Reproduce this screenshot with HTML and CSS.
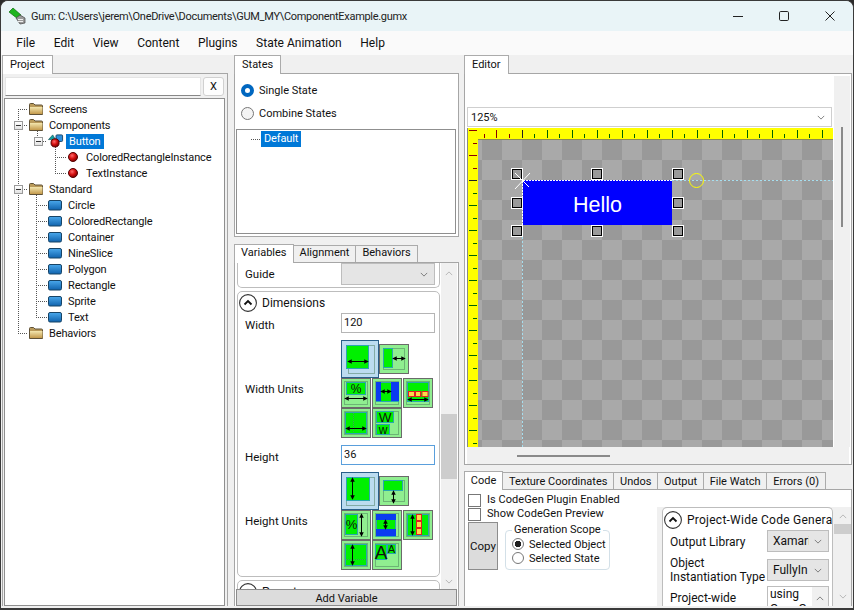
FILE: index.html
```html
<!DOCTYPE html>
<html lang="en">
<head>
  <meta charset="UTF-8">
  <title>Gum</title>
  <link rel="stylesheet" href="styles.css">
</head>
<body>
  <svg class="defs" width="0" height="0">
    <defs>
      <marker id="ah" viewBox="0 0 6 6" refX="5" refY="3" markerWidth="4.5" markerHeight="4.5" orient="auto-start-reverse"><path d="M0 0L6 3L0 6z"/></marker>
      <linearGradient id="folderFront" x1="0" y1="0" x2="0" y2="1"><stop offset="0" stop-color="#f3e6ae"/><stop offset="1" stop-color="#c49a4c"/></linearGradient>
      <linearGradient id="blueFront" x1="0" y1="0" x2="0" y2="1"><stop offset="0" stop-color="#4aa8ec"/><stop offset="1" stop-color="#0f62ac"/></linearGradient>
      <radialGradient id="ballFill" cx="0.4" cy="0.35" r="0.7"><stop offset="0" stop-color="#ff6a6a"/><stop offset="0.5" stop-color="#d40f0f"/><stop offset="1" stop-color="#6a0000"/></radialGradient>
      <symbol id="folder" viewBox="0 0 16 16"><path d="M1.5 13.5V3.5q0-1 1-1h3l1.500 1.500h6.500q1 0 1 1v8.500z" fill="#b99a5a" stroke="#5f5136"/><rect x="2" y="6" width="12.500" height="7" fill="url(#folderFront)"/></symbol>
      <symbol id="blue" viewBox="0 0 16 16"><rect x="1.500" y="3.500" width="13" height="9.500" rx="1.500" fill="url(#blueFront)" stroke="#174466"/></symbol>
      <symbol id="ball" viewBox="0 0 16 16"><circle cx="8" cy="8" r="4.500" fill="url(#ballFill)" stroke="#500"/></symbol>
      <symbol id="combo-icon" viewBox="0 0 17 16"><path d="M0.500 6.500L5 1.500L8 6.500z" fill="#12a0a0" stroke="#0b4f55" stroke-width=".7"/><rect x="8.500" y="1.500" width="7" height="7" rx="1" fill="#2f8fdc" stroke="#174466"/><circle cx="7.500" cy="10" r="4.300" fill="url(#ballFill)" stroke="#500"/></symbol>
      <symbol id="up" viewBox="0 0 18 18"><circle cx="9" cy="9" r="8.400" fill="#fff" stroke="#333" stroke-width="1.100"/><path d="M5.500 10.500L9 7L12.500 10.500" fill="none" stroke="#111" stroke-width="1.800"/></symbol>
      <symbol id="chev" viewBox="0 0 10 6"><path d="M1 1L5 5L9 1" fill="none" stroke="currentColor" stroke-width="1"/></symbol>
      <symbol id="chev-up" viewBox="0 0 10 6"><path d="M1 5L5 1L9 5" fill="none" stroke="currentColor" stroke-width="1"/></symbol>
      <symbol id="handle" viewBox="0 0 12 12"><rect x=".5" y=".5" width="11" height="11" fill="none" stroke="#fff"/><rect x="1.500" y="1.500" width="9" height="9" fill="#9a9a9a" stroke="#000"/></symbol>
    </defs>
  </svg>

  <div class="window">
    <div class="titlebar">
      <svg class="logo" viewBox="0 0 18 18">
        <path d="M1 5L5 1L13 8L10 12z" fill="#1fb51f" stroke="#0b6b0b" stroke-width=".7"/>
        <path d="M8 11L12 8L17 11V16L12 17z" fill="#9a9a9a" stroke="#444" stroke-width=".7"/>
        <path d="M10 12.500h5M10 14.500h5" stroke="#eee"/>
      </svg>
      <span class="title">Gum: C:\Users\jerem\OneDrive\Documents\GUM_MY\ComponentExample.gumx</span>
      <div class="winbtns">
        <span class="winbtn"><svg viewBox="0 0 10 10"><path d="M0 5.500h10" stroke="#222"/></svg></span>
        <span class="winbtn"><svg viewBox="0 0 10 10"><rect x=".5" y=".5" width="9" height="9" rx="1.200" fill="none" stroke="#222"/></svg></span>
        <span class="winbtn"><svg viewBox="0 0 10 10"><path d="M.5 .5L9.500 9.500M9.500 .5L.5 9.500" stroke="#222"/></svg></span>
      </div>
    </div>

    <nav class="menubar">
      <span>File</span><span>Edit</span><span>View</span><span>Content</span><span>Plugins</span><span>State Animation</span><span>Help</span>
    </nav>

    <div class="workspace">
      <!-- project -->
      <section class="col col-project">
        <div class="tabs"><span class="tab active">Project</span></div>
        <div class="pane project-pane">
          <div class="search">
            <div class="search-input"></div>
            <div class="search-btn">X</div>
          </div>
          <div class="tree project-tree">
            <svg class="tree-lines" viewBox="5 99 220 506" width="220" height="506">
              <path d="M18.500 109V333M18 109.500h10M18 125.500h10M18 189.500h10M18 333.500h10M37.500 125V137M41 141.500h6M55.500 147V173M55 157.500h11M55 173.500h11M36.500 189V317M36 205.500h12M36 221.500h12M36 237.500h12M36 253.500h12M36 269.500h12M36 285.500h12M36 301.500h12M36 317.500h12"/>
            </svg>
            <div class="node l0"><svg class="ico"><use href="#folder"/></svg><span class="lbl">Screens</span></div>
            <div class="node l0"><i class="exp"></i><svg class="ico"><use href="#folder"/></svg><span class="lbl">Components</span></div>
            <div class="node l1"><i class="exp"></i><svg class="ico"><use href="#combo-icon"/></svg><span class="lbl selected">Button</span></div>
            <div class="node l2"><svg class="ico"><use href="#ball"/></svg><span class="lbl">ColoredRectangleInstance</span></div>
            <div class="node l2"><svg class="ico"><use href="#ball"/></svg><span class="lbl">TextInstance</span></div>
            <div class="node l0"><i class="exp"></i><svg class="ico"><use href="#folder"/></svg><span class="lbl">Standard</span></div>
            <div class="node l1b"><svg class="ico"><use href="#blue"/></svg><span class="lbl">Circle</span></div>
            <div class="node l1b"><svg class="ico"><use href="#blue"/></svg><span class="lbl">ColoredRectangle</span></div>
            <div class="node l1b"><svg class="ico"><use href="#blue"/></svg><span class="lbl">Container</span></div>
            <div class="node l1b"><svg class="ico"><use href="#blue"/></svg><span class="lbl">NineSlice</span></div>
            <div class="node l1b"><svg class="ico"><use href="#blue"/></svg><span class="lbl">Polygon</span></div>
            <div class="node l1b"><svg class="ico"><use href="#blue"/></svg><span class="lbl">Rectangle</span></div>
            <div class="node l1b"><svg class="ico"><use href="#blue"/></svg><span class="lbl">Sprite</span></div>
            <div class="node l1b"><svg class="ico"><use href="#blue"/></svg><span class="lbl">Text</span></div>
            <div class="node l0"><svg class="ico"><use href="#folder"/></svg><span class="lbl">Behaviors</span></div>
          </div>
        </div>
      </section>

      <!-- states + variables -->
      <section class="col col-middle">
        <div class="tabs"><span class="tab active">States</span></div>
        <div class="pane states-pane">
          <label class="state-opt"><i class="radio-on"></i>Single State</label>
          <label class="state-opt"><i class="radio-off"></i>Combine States</label>
          <div class="tree states-tree">
            <div class="state-node"><i class="dots"></i><span class="lbl selected">Default</span></div>
          </div>
        </div>

        <div class="tabs tabs-vars"><span class="tab active">Variables</span><span class="tab">Alignment</span><span class="tab">Behaviors</span></div>
        <div class="pane vars-pane">
          <div class="vars-body">
            <div class="vars-view">
              <div class="group group-guide">
                <div class="row"><span class="row-label">Guide</span><div class="combo combo-guide"><svg class="chev"><use href="#chev"/></svg></div></div>
              </div>
              <div class="group group-dim">
                <div class="group-head"><svg class="up"><use href="#up"/></svg><span>Dimensions</span></div>
                <div class="row"><span class="row-label">Width</span><div class="textbox">120</div></div>
                <div class="row row-units">
                  <span class="row-label">Width Units</span>
                  <div class="units">
                    <div class="unit-row">
                      <div class="unit unit-sel"><svg viewBox="0 0 36 36">
                        <rect class="u-dots" x="6.500" y="4.500" width="26" height="28"/>
                        <rect class="u-green" x="4.500" y="4.500" width="22" height="23"/>
                        <path class="arr" d="M6 20.500h20" marker-start="url(#ah)" marker-end="url(#ah)"/></svg></div>
                      <div class="unit"><svg viewBox="0 0 28 28">
                        <rect class="u-dots" x="3.500" y="3.500" width="21" height="21"/>
                        <rect class="u-green" x="3.500" y="3.500" width="9" height="19"/>
                        <path class="arr" d="M13 13.500h12" marker-start="url(#ah)" marker-end="url(#ah)"/></svg></div>
                    </div>
                    <div class="unit-row">
                      <div class="unit"><svg viewBox="0 0 28 28">
                        <rect class="u-dots" x="2.500" y="2.500" width="23" height="23"/>
                        <rect class="u-green" x="4.500" y="3.500" width="19" height="12"/>
                        <text class="u-txt" x="14" y="14" font-size="12">%</text>
                        <path class="arr" d="M3 19.500h22" marker-start="url(#ah)" marker-end="url(#ah)"/></svg></div>
                      <div class="unit"><svg viewBox="0 0 28 28">
                        <rect class="u-dots" x="2.500" y="2.500" width="23" height="23"/>
                        <rect class="u-green" x="3.500" y="3.500" width="22" height="19"/>
                        <rect class="u-blue" x="3" y="3" width="5" height="19"/><rect class="u-blue" x="18" y="3" width="8" height="19"/>
                        <path class="arr" d="M8 12.500h10" marker-start="url(#ah)" marker-end="url(#ah)"/></svg></div>
                      <div class="unit"><svg viewBox="0 0 28 28">
                        <rect class="u-dots" x="2.500" y="2.500" width="23" height="23"/>
                        <rect class="u-green" x="3.500" y="3.500" width="21" height="19"/>
                        <rect class="u-yel" x="4.500" y="12.500" width="6" height="5"/><rect class="u-yel" x="11.500" y="12.500" width="5" height="5"/><rect class="u-yel" x="18" y="12.500" width="6" height="5"/>
                        <path class="arr" d="M4 20.500h20" marker-start="url(#ah)" marker-end="url(#ah)"/></svg></div>
                    </div>
                    <div class="unit-row">
                      <div class="unit"><svg viewBox="0 0 28 28">
                        <rect class="u-dots" x="2.500" y="2.500" width="23" height="23"/>
                        <rect class="u-green" x="3.500" y="3.500" width="21" height="21"/>
                        <path d="M11.500 4V24" stroke="#3aa05a" stroke-dasharray="1 1" fill="none"/>
                        <path class="arr" d="M4 19.500h20" marker-start="url(#ah)" marker-end="url(#ah)"/></svg></div>
                      <div class="unit"><svg viewBox="0 0 28 28">
                        <rect class="u-dots" x="2.500" y="2.500" width="23" height="23"/>
                        <rect class="u-green" x="3.500" y="2.500" width="17" height="11"/>
                        <rect class="u-green" x="3.500" y="15.500" width="13" height="10"/>
                        <text class="u-txt" x="12" y="12.500" font-size="13.500">W</text>
                        <text class="u-txt" x="10" y="25" font-size="12">w</text></svg></div>
                    </div>
                  </div>
                </div>
                <div class="row"><span class="row-label">Height</span><div class="textbox textbox-focus">36</div></div>
                <div class="row row-units">
                  <span class="row-label">Height Units</span>
                  <div class="units">
                    <div class="unit-row">
                      <div class="unit unit-sel"><svg viewBox="0 0 36 36">
                        <rect class="u-dots" x="4.500" y="4.500" width="28" height="28"/>
                        <rect class="u-green" x="4.500" y="4.500" width="23" height="23"/>
                        <path class="arr" d="M10.500 5V26" marker-start="url(#ah)" marker-end="url(#ah)"/></svg></div>
                      <div class="unit"><svg viewBox="0 0 28 28">
                        <rect class="u-dots" x="3.500" y="3.500" width="21" height="21"/>
                        <rect class="u-green" x="3.500" y="3.500" width="19" height="10"/>
                        <path class="arr" d="M13.500 14V26" marker-start="url(#ah)" marker-end="url(#ah)"/></svg></div>
                    </div>
                    <div class="unit-row">
                      <div class="unit"><svg viewBox="0 0 28 28">
                        <rect class="u-dots" x="2.500" y="2.500" width="23" height="23"/>
                        <rect class="u-green" x="3.500" y="3.500" width="12" height="20"/>
                        <text class="u-txt" x="9.500" y="18" font-size="13">%</text>
                        <path class="arr" d="M19.500 3V25" marker-start="url(#ah)" marker-end="url(#ah)"/></svg></div>
                      <div class="unit"><svg viewBox="0 0 28 28">
                        <rect class="u-dots" x="2.500" y="2.500" width="23" height="23"/>
                        <rect class="u-green" x="3.500" y="3.500" width="19" height="22"/>
                        <rect class="u-blue" x="3" y="3" width="20" height="6"/><rect class="u-blue" x="3" y="18" width="20" height="7"/>
                        <path class="arr" d="M12.500 9V18" marker-start="url(#ah)" marker-end="url(#ah)"/></svg></div>
                      <div class="unit"><svg viewBox="0 0 28 28">
                        <rect class="u-dots" x="2.500" y="2.500" width="23" height="23"/>
                        <rect class="u-green" x="3.500" y="3.500" width="21" height="21"/>
                        <rect class="u-yel" x="12.500" y="3.500" width="5" height="6"/><rect class="u-yel" x="12.500" y="10.500" width="5" height="6"/><rect class="u-yel" x="12.500" y="17.500" width="5" height="6"/>
                        <path class="arr" d="M8.500 4V24" marker-start="url(#ah)" marker-end="url(#ah)"/></svg></div>
                    </div>
                    <div class="unit-row">
                      <div class="unit"><svg viewBox="0 0 28 28">
                        <rect class="u-dots" x="2.500" y="2.500" width="23" height="23"/>
                        <rect class="u-green" x="3.500" y="3.500" width="21" height="21"/>
                        <path d="M4 18.500H24" stroke="#3aa05a" stroke-dasharray="1 1" fill="none"/>
                        <path class="arr" d="M10.500 4V24" marker-start="url(#ah)" marker-end="url(#ah)"/></svg></div>
                      <div class="unit"><svg viewBox="0 0 28 28">
                        <rect class="u-dots" x="2.500" y="2.500" width="23" height="23"/>
                        <rect class="u-green" x="2.500" y="3.500" width="11" height="15"/>
                        <rect class="u-green" x="14.500" y="3.500" width="8" height="9"/>
                        <text class="u-txt" x="8" y="17.500" font-size="19">A</text>
                        <text class="u-txt" x="18.500" y="11.500" font-size="11">A</text></svg></div>
                    </div>
                  </div>
                </div>
              </div>
              <div class="group group-next">
                <div class="group-head"><svg class="up"><use href="#up"/></svg><span>Parent</span></div>
              </div>
            </div>
            <div class="scrollbar scroll-vars">
              <svg class="chev"><use href="#chev-up"/></svg>
              <div class="thumb thumb-vars"></div>
              <svg class="chev"><use href="#chev"/></svg>
            </div>
          </div>
          <div class="add-var">Add Variable</div>
        </div>
      </section>

      <!-- editor + code -->
      <section class="col col-editor">
        <div class="tabs"><span class="tab active">Editor</span></div>
        <div class="pane editor-pane">
          <div class="editor-left">
            <div class="combo zoom-combo"><span>125%</span><svg class="chev"><use href="#chev"/></svg></div>
            <div class="canvas">
              <div class="ruler-left">
                <svg viewBox="468 128 10 319" width="10" height="319">
                  <path stroke="#8b0000" d="M469 130.500h8M473 143.500h4M469 155.500h8M473 168.500h4"/>
                  <path stroke="#222" d="M469 180.500h8"/>
                  <path stroke="#006400" d="M473 193.500h4M469 205.500h8M473 218.500h4M469 230.500h8M473 243.500h4M469 255.500h8M473 268.500h4M469 280.500h8M473 293.500h4M469 305.500h8M473 318.500h4M469 330.500h8M473 343.500h4M469 355.500h8M473 368.500h4M469 380.500h8M473 393.500h4M469 405.500h8M473 418.500h4M469 430.500h8M473 443.500h4"/>
                </svg>
              </div>
              <div class="canvas-right">
                <div class="ruler-top">
                  <svg viewBox="478 128 355 11" width="355" height="11">
                    <path stroke="#8b0000" d="M484.500 134v4M496.500 130v8M509.500 134v4"/>
                    <path stroke="#222" d="M522.500 130v8"/>
                    <path stroke="#006400" d="M534.500 134v4M547.500 130v8M559.500 134v4M572.500 130v8M584.500 134v4M597.500 130v8M609.500 134v4M622.500 130v8M634.500 134v4M647.500 130v8M659.500 134v4M672.500 130v8M684.500 134v4M697.500 130v8M709.500 134v4M722.500 130v8M734.500 134v4M747.500 130v8M759.500 134v4M772.500 130v8M784.500 134v4M797.500 130v8M809.500 134v4M822.500 130v8"/>
                  </svg>
                </div>
                <div class="checker">
                  <div class="hello">Hello</div>
                  <svg class="overlay" viewBox="478 140 355 307" width="355" height="307">
                    <path class="guide" d="M672 180.500H833M522.500 225V447"/>
                    <path class="edge" d="M523 180.500H672M522.500 181V225"/>
                    <circle cx="696.500" cy="180.500" r="7" fill="none" stroke="#ff0"/>
                    <use href="#handle" x="511" y="168" width="12" height="12"/>
                    <use href="#handle" x="591" y="168" width="12" height="12"/>
                    <use href="#handle" x="672" y="168" width="12" height="12"/>
                    <use href="#handle" x="511" y="197" width="12" height="12"/>
                    <use href="#handle" x="672" y="197" width="12" height="12"/>
                    <use href="#handle" x="511" y="225" width="12" height="12"/>
                    <use href="#handle" x="591" y="225" width="12" height="12"/>
                    <use href="#handle" x="672" y="225" width="12" height="12"/>
                    <path d="M515 189L530 173M515 173L529 187" stroke="#fff" fill="none"/>
                  </svg>
                </div>
              </div>
            </div>
          </div>
          <div class="scrollbar scroll-editor"><div class="thin-v"></div></div>
          <div class="scroll-h"><div class="thin-h"></div></div>
        </div>

        <div class="tabs tabs-code"><span class="tab active">Code</span><span class="tab">Texture Coordinates</span><span class="tab">Undos</span><span class="tab">Output</span><span class="tab">File Watch</span><span class="tab">Errors (0)</span></div>
        <div class="pane code-pane">
          <div class="code-left">
            <label class="check"><i class="box"></i>Is CodeGen Plugin Enabled</label>
            <label class="check"><i class="box"></i>Show CodeGen Preview</label>
            <div class="code-actions">
              <div class="copy-btn">Copy</div>
              <fieldset class="scope">
                <legend>Generation Scope</legend>
                <label class="scope-opt"><i class="scope-radio on"></i>Selected Object</label>
                <label class="scope-opt"><i class="scope-radio"></i>Selected State</label>
              </fieldset>
            </div>
          </div>
          <div class="code-right">
            <div class="code-group">
              <div class="group-head code-head"><svg class="up"><use href="#up"/></svg><span>Project-Wide Code Generation</span></div>
              <div class="code-row"><span>Output Library</span><div class="combo combo-small"><span>Xamarin</span><svg class="chev"><use href="#chev"/></svg></div></div>
              <div class="code-row"><span>Object<br>Instantiation Type</span><div class="combo combo-small"><span>FullyIn</span><svg class="chev"><use href="#chev"/></svg></div></div>
              <div class="code-row code-row-top"><span>Project-wide</span>
                <div class="usings"><span>using<br>Gum.Gue</span><div class="usings-bar"><svg class="chev"><use href="#chev-up"/></svg></div></div>
              </div>
            </div>
            <div class="scrollbar scroll-code">
              <svg class="chev"><use href="#chev-up"/></svg>
              <div class="thumb thumb-code"></div>
              <svg class="chev chev-end"><use href="#chev"/></svg>
            </div>
          </div>
        </div>
      </section>
    </div>
  </div>
</body>
</html>
```

FILE: styles.css
```css
* { box-sizing: border-box; }
html, body { margin: 0; padding: 0; height: 610px; overflow: hidden; background: #2b2b2b; }
body { font-family: Roboto, "Liberation Sans", sans-serif; font-size: 11px; color: #111; }
.defs { position: absolute; }
i { display: block; font-style: normal; }

.window { width: 854px; height: 610px; display: flex; flex-direction: column; background: #f0f0f0; border: 1px solid #3a3a3a; border-bottom-width: 2px; border-radius: 8px 8px 0 0; overflow: hidden; }

/* title + menu */
.titlebar { height: 30px; flex: none; display: flex; align-items: center; background: #e9f4f7; padding-left: 7px; }
.logo { width: 18px; height: 18px; margin-right: 5px; }
.title { font-size: 11px; letter-spacing: -0.3px; color: #222; }
.winbtns { margin-left: auto; display: flex; }
.winbtn { width: 46px; height: 30px; display: flex; align-items: center; justify-content: center; }
.winbtn svg { width: 10px; height: 10px; }
.menubar { height: 24px; flex: none; display: flex; align-items: center; background: #fafafa; padding-left: 6px; font-size: 12px; }
.menubar span { padding: 0 9.3px; }

.workspace { flex: 1; display: flex; padding: 0 1px 2px 1px; min-height: 0; }
.col { display: flex; flex-direction: column; }
.col-project { width: 226px; }
.col-middle { width: 225px; margin-left: 6px; }
.col-editor { width: 388px; margin-left: 5px; }

/* tabs */
.tabs { display: flex; height: 18px; flex: none; align-items: flex-end; position: relative; z-index: 1; }
.tab { height: 17px; padding: 0 5px; background: #f0f0f0; border: 1px solid #ababab; border-left-width: 0; border-bottom: 0; line-height: 15px; margin-bottom: 0; white-space: nowrap; }
.tab.active { height: 19px; background: #fff; border-left-width: 1px; margin-bottom: -1px; padding: 0 7px; line-height: 17px; }
.tabs-vars { margin-top: 6px; height: 19px; }
.tabs-vars .tab { padding: 0 6px; line-height: 14px; }
.tabs-vars .tab.active { line-height: 16px; }
.tabs-code { margin-top: 6px; }
.tabs-code .tab { padding: 0 5.8px; line-height: 17px; }
.tabs-code .tab.active { line-height: 18px; }
.pane { border: 1px solid #a6a6a6; background: #fff; min-height: 0; }

/* project */
.project-pane { flex: 1; display: flex; flex-direction: column; padding: 3px 2px 0 1px; background: #f0f0f0; border-bottom: 0; }
.search { display: flex; height: 19px; flex: none; margin-bottom: 2px; }
.search-input { width: 196px; background: #fff; border: 1px solid #e4e4e4; border-bottom-color: #888; margin-left: 1px; }
.search-btn { width: 21px; margin-left: 2px; background: #fdfdfd; border: 1px solid #d0d0d0; border-radius: 3px; text-align: center; line-height: 17px; }
.tree { background: #fff; border: 1px solid #8f8f8f; position: relative; letter-spacing: -0.14px; }
.project-tree { flex: 1; padding-top: 2px; }
.tree-lines { position: absolute; left: 0; top: 0; fill: none; stroke: #555; stroke-dasharray: 1 1; }
.node { display: flex; align-items: center; height: 16px; position: relative; white-space: nowrap; }
.l0 { padding-left: 23px; }
.l1 { padding-left: 43px; }
.l1b { padding-left: 42px; }
.l2 { padding-left: 60px; }
.ico { width: 16px; height: 16px; flex: none; margin-right: 2px; }
.lbl { padding: 0 3px; line-height: 15px; }
.lbl.selected { background: #0078d7; color: #fff; }
.exp { width: 9px; height: 9px; margin-left: -14px; margin-right: 5px; border: 1px solid #9a9a9a; background: linear-gradient(#fff, #e2e2e2); position: relative; flex: none; }
.exp::after { content: ""; position: absolute; left: 1px; right: 1px; top: 3px; height: 1px; background: #333; }

/* states */
.states-pane { height: 164px; flex: none; padding: 0 2px 0 1px; }
.state-opt { display: flex; align-items: center; height: 23px; padding-left: 5px; }
.state-opt:first-child { margin-top: 5px; }
.radio-on, .radio-off { width: 13px; height: 13px; border-radius: 50%; margin-right: 5px; }
.radio-on { border: 4px solid #0067c0; background: #fff; }
.radio-off { border: 1px solid #777; background: #f4f4f4; }
.states-tree { height: 105px; margin-top: 4px; padding-top: 1px; }
.state-node { display: flex; align-items: center; height: 16px; padding-left: 14px; }
.dots { width: 9px; height: 0; border-top: 1px dotted #555; margin-right: 1px; }
.state-node .lbl { padding: 0 3px; line-height: 16px; }

/* variables */
.vars-pane { flex: 1; display: flex; flex-direction: column; border-bottom: 0; padding: 0; }
.vars-body { flex: 1; display: flex; min-height: 0; overflow: hidden; }
.vars-view { width: 205px; padding-left: 2px; overflow: hidden; }
.group { width: 203px; background: #fff; border: 1px solid #bdbdbd; border-radius: 5px; margin-bottom: 3px; }
.group-guide { border-top: 0; border-radius: 0 0 5px 5px; padding-bottom: 2px; }
.group-head { display: flex; align-items: center; height: 21px; padding-top: 1px; font-size: 12px; }
.up { width: 18px; height: 18px; margin: 0 5px 0 1px; flex: none; }
.row { display: flex; align-items: center; margin-left: 7px; }
.row-label { width: 96px; font-size: 11.5px; }
.group-dim .row-label { padding-top: 3px; }
.group-dim .row-units .row-label { padding-top: 0; }
.row-units { margin-top: 7px; margin-bottom: 7px; }
.group-dim { height: 286px; }
.group-next { height: 40px; }
.textbox { width: 94px; height: 20px; background: #fff; border: 1px solid #b5b5b5; padding: 0 2px; line-height: 17px; }
.textbox-focus { border-color: #5a9fdc; }
.combo { position: relative; background: #e5e5e5; border: 1px solid #bdbdbd; display: flex; align-items: center; }
.combo span { overflow: hidden; white-space: nowrap; }
.combo-guide { width: 94px; height: 22px; }
.chev { width: 8px; height: 5px; color: #666; flex: none; }
.combo .chev { position: absolute; right: 6px; top: 50%; margin-top: -2px; }

.units { display: flex; flex-direction: column; align-items: flex-start; }
.unit-row { display: flex; align-items: center; }
.unit { width: 30px; height: 30px; border: 1px solid #6a6a6a; background: #90ee90; flex: none; }
.unit svg { display: block; width: 28px; height: 28px; }
.unit + .unit { margin-left: 1px; }
.unit-sel { width: 38px; height: 38px; background: #bcdcf0; border-color: #2a5f8a; }
.unit-sel svg { width: 36px; height: 36px; }
.unit-sel + .unit { margin-left: 0; }
.u-dots { fill: none; stroke: #4a7a5a; stroke-dasharray: 1 1; }
.u-green { fill: #00f000; stroke: #2aa6b0; }
.u-blue { fill: #0a3cf0; }
.u-yel { fill: #ffd84a; stroke: #e02020; }
.arr { stroke: #000; fill: none; }
.u-txt { font-family: "Liberation Sans", sans-serif; text-anchor: middle; fill: #111; }

.scrollbar { background: #f0f0f0; display: flex; flex-direction: column; align-items: center; flex: none; }
.scroll-vars { width: 16px; margin-left: 1px; padding-top: 8px; }
.scroll-vars .chev { color: #aaa; }
.thumb { background: #cdcdcd; align-self: stretch; }
.thumb-vars { height: 65px; margin-top: 138px; margin-bottom: 100px; }
.add-var { height: 17px; flex: none; margin: 0 1px; background: #dcdcdc; border: 1px solid #8c8c8c; text-align: center; line-height: 17px; }

/* editor */
.editor-pane { height: 392px; flex: none; display: grid; grid-template-columns: 367px 16px; grid-template-rows: 1fr 17px; padding: 0 0 0 2px; column-gap: 0; }
.editor-left { padding-top: 33px; }
.zoom-combo { width: 365px; height: 20px; background: #fff; border-color: #cfcfcf; padding-left: 3px; margin-bottom: 1px; }
.canvas { display: flex; width: 366px; height: 319px; border-left: 1px solid #888; }
.ruler-left { width: 10px; background: #ff0; flex: none; }
.ruler-left svg, .ruler-top svg { display: block; }
.canvas-right { flex: 1; display: flex; flex-direction: column; min-width: 0; }
.ruler-top { height: 12px; flex: none; background: #ff0; border-bottom: 1px solid #8c8c4c; }
.checker { flex: 1; position: relative; overflow: hidden; background: repeating-conic-gradient(#999 0 25%, #a9a9a9 0 50%) -16px 0 / 40px 40px; }
.hello { position: absolute; left: 45px; top: 40px; width: 149px; height: 45px; background: #00f; color: #fff; font-family: "Liberation Sans", sans-serif; font-size: 21.5px; line-height: 51px; text-align: center; }
.overlay { position: absolute; left: 0; top: 0; }
.guide { stroke: #a5deef; fill: none; stroke-dasharray: 2 2; }
.edge { stroke: #fff; fill: none; stroke-dasharray: 2 1; }
.scroll-editor { margin-top: 2px; position: relative; }
.thin-v { width: 2px; height: 100px; background: #8a8a8a; margin-top: 51px; }
.scroll-h { grid-column: 1 / 3; background: #f0f0f0; margin-right: 1px; }
.thin-h { width: 93px; height: 2px; background: #8a8a8a; margin: 8px 0 0 50px; }

/* code tab */
.code-pane { flex: 1; display: flex; border-bottom: 0; overflow: hidden; min-height: 0; }
.code-left { width: 192px; flex: none; padding: 4px 0 0 3px; }
.check { display: flex; height: 14px; align-items: flex-start; line-height: 11px; letter-spacing: 0.05px; }
.box { width: 13px; height: 13px; border: 1px solid #777; background: #fff; margin-right: 6px; flex: none; }
.code-actions { display: flex; }
.copy-btn { width: 30px; height: 48px; flex: none; background: #dcdcdc; border: 1px solid #8c8c8c; text-align: center; line-height: 46px; font-size: 11.5px; }
.scope { margin: 1px 0 0 7px; padding: 0 5px 0 6px; width: 105px; min-width: 0; height: 47px; border: 1px solid #d3e0e8; border-radius: 4px; }
.scope legend { padding: 0 2px; margin-left: 0; line-height: 14px; white-space: nowrap; }
.scope-opt { display: flex; align-items: center; height: 14px; white-space: nowrap; }
.scope-radio { width: 12px; height: 12px; border-radius: 50%; border: 1px solid #777; background: #fff; margin-right: 5px; flex: none; }
.scope-radio.on { background: radial-gradient(circle, #222 0 3px, #fff 3.500px); }

.code-right { flex: 1; display: flex; background: #f0f0f0; margin-top: 17px; padding-left: 5px; min-width: 0; font-size: 12px; }
.code-group { width: 171px; flex: none; background: #fff; border: 1px solid #bdbdbd; border-bottom: 0; border-radius: 5px 5px 0 0; overflow: hidden; }
.code-head { height: 19px; padding-top: 5px; white-space: nowrap; letter-spacing: 0.25px; }
.code-row { display: flex; align-items: center; justify-content: space-between; min-height: 28px; padding: 0 3px 0 7px; line-height: 14px; white-space: nowrap; }
.code-row > span:first-child { margin-top: 1px; }
.code-row-top { align-items: flex-start; padding-top: 2px; }
.code-row-top > span:first-child { margin-top: 5px; }
.combo-small { width: 62px; height: 22px; padding-left: 5px; }
.combo-small span { width: 36px; }
.usings { width: 62px; height: 40px; border: 1px solid #bdbdbd; display: flex; padding-left: 2px; line-height: 15px; overflow: hidden; }
.usings > span { width: 42px; overflow: hidden; }
.usings-bar { flex: 1; background: #f0f0f0; text-align: center; padding-top: 3px; }
.scroll-code { width: 17px; margin-left: 1px; padding-top: 7px; }
.scroll-code .chev { color: #aaa; }
.thumb-code { height: 10px; margin-top: 5px; }
.chev-end { margin-top: 60px; }
```
